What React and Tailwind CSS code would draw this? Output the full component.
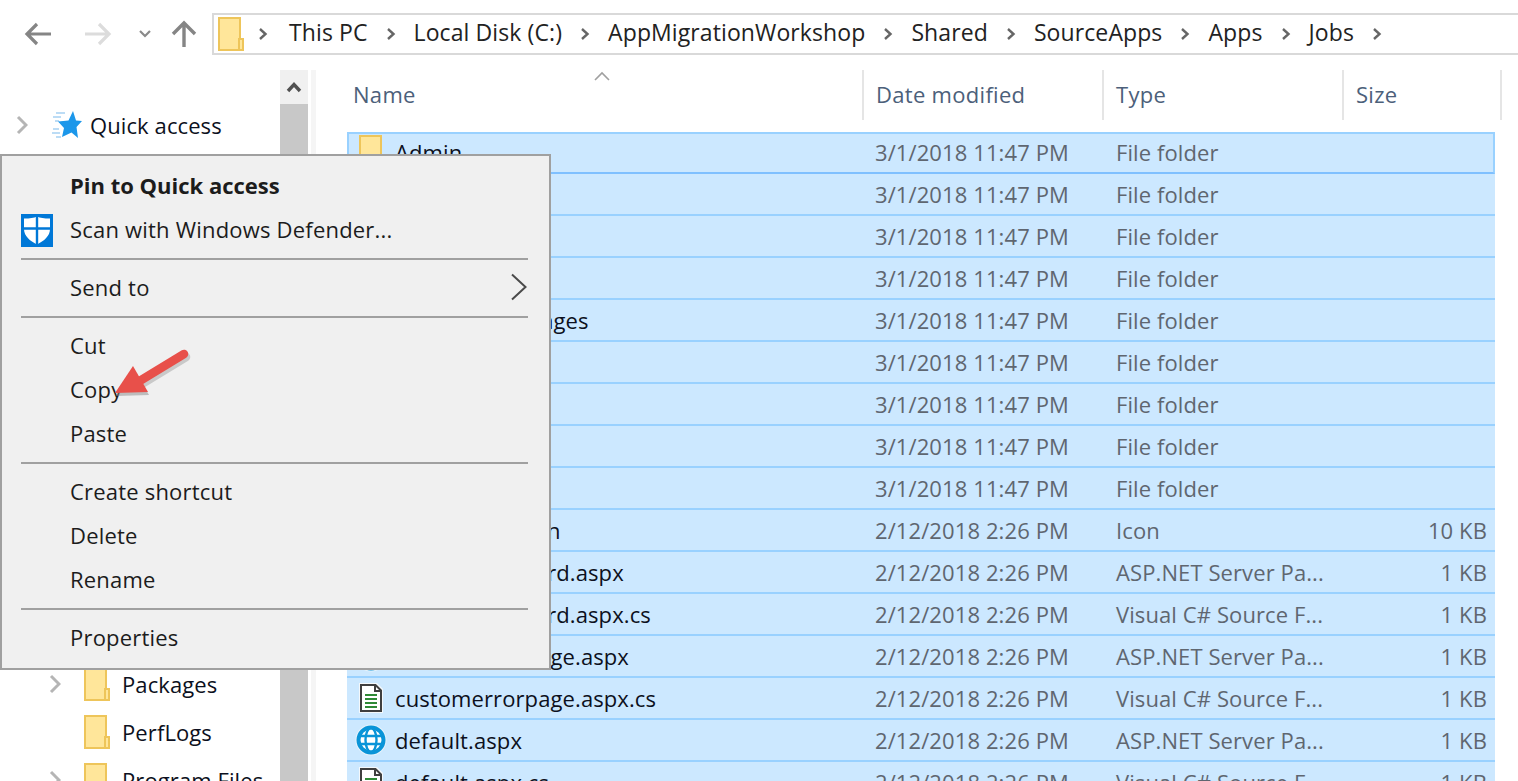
function Folder({ className = "" }) {
  return (
    <svg className={className} width="26" height="34" viewBox="0 0 26 34">
      <path d="M1 1H22V33H1Z" fill="#ffe69a" stroke="#eec55a" strokeWidth="2" />
      <path d="M21 22H25V33H21Z" fill="#ffe69a" stroke="#eec55a" strokeWidth="2" />
    </svg>
  );
}

function Chevron({ light }) {
  return (
    <svg width="12" height="20" viewBox="0 0 12 20" className="shrink-0">
      <path d="M2 2L10 10L2 18" fill="none" stroke={light ? "#b5b5b5" : "#8a8a8a"} strokeWidth="3" />
    </svg>
  );
}

function Crumb({ children }) {
  return (
    <div className="flex items-center gap-[18px]">
      <span className="pb-[4px]">{children}</span>
      <svg width="10" height="14" viewBox="0 0 10 14"><path d="M2 2L7.5 7L2 12" fill="none" stroke="#666" strokeWidth="2.4" /></svg>
    </div>
  );
}

function DocIcon() {
  return (
    <svg width="26" height="30" viewBox="0 0 26 30">
      <path d="M1 0H19L25 6V30H1Z" fill="#f4f8fb" />
      <path d="M3 2H17.5L23 7.5V28H3Z" fill="#fff" stroke="#3f3f3f" strokeWidth="2" />
      <path d="M17 2V8H23" fill="none" stroke="#3f3f3f" strokeWidth="2" />
      <path d="M7 12H19M7 16H19M7 20H19M7 24H19" stroke="#2f8a36" strokeWidth="2" />
    </svg>
  );
}

function GlobeIcon() {
  return (
    <svg width="32" height="32" viewBox="0 0 32 32">
      <circle cx="16" cy="16" r="15.5" fill="#e8f3fb" />
      <circle cx="16" cy="16" r="12.5" fill="#fff" stroke="#0a94d8" strokeWidth="4" />
      <ellipse cx="16" cy="16" rx="5.5" ry="12" fill="none" stroke="#0a94d8" strokeWidth="2.4" />
      <path d="M4 12H28M4 20H28" stroke="#0a94d8" strokeWidth="2.4" />
    </svg>
  );
}

function TreeItem({ name, chevron }) {
  return (
    <div className="flex items-center h-[48px]">
      <div className="w-[46px] pl-[11px] flex justify-start">{chevron && <Chevron light />}</div>
      <Folder />
      <span className="ml-[12px] text-[#0c1020]">{name}</span>
    </div>
  );
}

const D1 = "3/1/2018 11:47 PM";
const D2 = "2/12/2018 2:26 PM";
const ASP = "ASP.NET Server Pa...";
const CS = "Visual C# Source F...";
const rows = [
  { icon: "folder", name: "Admin", date: D1, type: "File folder", first: true },
  { icon: "folder", name: "", date: D1, type: "File folder" },
  { icon: "folder", name: "", date: D1, type: "File folder" },
  { icon: "folder", name: "", date: D1, type: "File folder" },
  { icon: "folder", name: "CustomErrorPages", date: D1, type: "File folder" },
  { icon: "folder", name: "", date: D1, type: "File folder" },
  { icon: "folder", name: "", date: D1, type: "File folder" },
  { icon: "folder", name: "", date: D1, type: "File folder" },
  { icon: "folder", name: "", date: D1, type: "File folder" },
  { icon: "doc", name: "Application Icon", date: D2, type: "Icon", size: "10 KB" },
  { icon: "globe", name: "changepassword.aspx", date: D2, type: ASP, size: "1 KB" },
  { icon: "doc", name: "changepassword.aspx.cs", date: D2, type: CS, size: "1 KB" },
  { icon: "globe", name: "customerrorpage.aspx", date: D2, type: ASP, size: "1 KB" },
  { icon: "doc", name: "customerrorpage.aspx.cs", date: D2, type: CS, size: "1 KB" },
  { icon: "globe", name: "default.aspx", date: D2, type: ASP, size: "1 KB" },
  { icon: "doc", name: "default.aspx.cs", date: D2, type: CS, size: "1 KB" },
];

function Row({ r }) {
  const cls = r.first
    ? "grid-cols-[513px_240px_240px_151px] border-2 border-[#99d1ff] border-b-[#7fc0ff] pb-[2px]"
    : "grid-cols-[515px_240px_240px_153px] border-b-2 border-[#99d1ff]";
  return (
    <div className={"grid items-center h-[42px] shrink-0 bg-[#cce8ff] " + cls}>
      <div className="flex items-center">
        <div className={(r.first ? "w-[46px]" : "w-[48px]") + " flex justify-center shrink-0"}>
          {r.icon === "folder" && <Folder />}
          {r.icon === "doc" && <DocIcon />}
          {r.icon === "globe" && <GlobeIcon />}
        </div>
        <span className="text-[#0c1020] whitespace-nowrap">{r.name}</span>
      </div>
      <span className="pl-[13px] text-[#5f6670]">{r.date}</span>
      <span className="pl-[14px] text-[#5f6670]">{r.type}</span>
      <span className="pr-[8px] text-right text-[#5f6670]">{r.size}</span>
    </div>
  );
}

function Head({ children, className = "" }) {
  return (
    <div className={"h-full flex items-center pb-[2px] tracking-[0.3px] text-[#4c607a] " + className}>{children}</div>
  );
}

function Item({ children, bold, icon, arrow }) {
  return (
    <div className={"flex items-center h-[44px] pb-[2px] pl-[19px] pr-[21px] text-[#1c1c1c] " + (bold ? "font-bold tracking-normal" : "tracking-[0.2px]")}>
      <div className="w-[49px] shrink-0 flex items-center">{icon}</div>
      <span className="flex-1 whitespace-nowrap">{children}</span>
      {arrow && (
        <svg width="18" height="28" viewBox="0 0 18 28"><path d="M2 1.5L15.5 14L2 26.5" fill="none" stroke="#4a4a4a" strokeWidth="2" /></svg>
      )}
    </div>
  );
}

function Sep() {
  return (
    <div className="h-[14px] flex items-center pl-[19px] pr-[21px]">
      <div className="h-[2px] w-full bg-[#a0a0a0]" />
    </div>
  );
}

export default function App() {
  return (
    <div className="relative h-[781px] w-[1518px] overflow-hidden bg-white flex flex-col text-[22px] leading-none tracking-[0.1px] [font-family:'Open_Sans','Noto_Sans',sans-serif]">
      {/* toolbar */}
      <div className="h-[70px] shrink-0 flex items-start pt-[13px]">
        <div className="flex items-center h-[42px] w-[212px] shrink-0">
          <svg className="ml-[24px]" width="28" height="24" viewBox="0 0 28 24"><path d="M27 12H3M13 2L3 12L13 22" fill="none" stroke="#858585" strokeWidth="3.2" /></svg>
          <svg className="ml-[32px]" width="28" height="24" viewBox="0 0 28 24"><path d="M1 12H25M15 2L25 12L15 22" fill="none" stroke="#dcdcdc" strokeWidth="3.2" /></svg>
          <svg className="ml-[26px]" width="14" height="10" viewBox="0 0 14 10"><path d="M2 2L7 7L12 2" fill="none" stroke="#8a8a8a" strokeWidth="2.2" /></svg>
          <svg className="ml-[19px]" width="26" height="28" viewBox="0 0 26 28"><path d="M13 27V3M2 14L13 3L24 14" fill="none" stroke="#858585" strokeWidth="3.4" /></svg>
        </div>
        <div className="flex-1 h-[42px] border-2 border-r-0 border-[#d9d9d9] flex items-center pl-[4px] text-[#222] text-[23px]">
          <Folder />
          <div className="flex items-center gap-[18px] ml-[14px] whitespace-nowrap">
            <svg className="mr-[3px]" width="10" height="14" viewBox="0 0 10 14"><path d="M2 2L7.5 7L2 12" fill="none" stroke="#666" strokeWidth="2.4" /></svg>
            <Crumb>This PC</Crumb>
            <Crumb>Local Disk (C:)</Crumb>
            <Crumb>AppMigrationWorkshop</Crumb>
            <Crumb>Shared</Crumb>
            <Crumb>SourceApps</Crumb>
            <Crumb>Apps</Crumb>
            <Crumb>Jobs</Crumb>
          </div>
        </div>
      </div>

      {/* body */}
      <div className="flex flex-1 min-h-0">
        {/* navigation pane */}
        <div className="w-[280px] shrink-0 pt-[31px] pl-[6px]">
          <div className="flex items-center h-[48px]">
            <div className="w-[32px] flex justify-center"><Chevron light /></div>
            <svg className="ml-[14px]" width="30" height="28" viewBox="0 0 30 28">
              <path d="M4 2H13M1 6H9M3 10H7M1 18H7M0 22H8M4 26H9" stroke="#bcdcf5" strokeWidth="2" />
              <path d="M21 0L24 9.500L30 10L24.500 16L26 27L19.500 21.500L10 26L12 17L6 10.500L16.500 9.500Z" fill="#1c97ea" />
            </svg>
            <span className="ml-[8px] text-[#0c1020]">Quick access</span>
          </div>
          <div className="h-[511px]" />
          <div className="pl-[32px]">
            <TreeItem name="Packages" chevron />
            <TreeItem name="PerfLogs" />
            <TreeItem name="Program Files" chevron />
          </div>
        </div>

        {/* scrollbar */}
        <div className="w-[28px] shrink-0 flex flex-col bg-[#c8c8c8]">
          <div className="h-[34px] bg-[#f0f0f0] flex items-center justify-center">
            <svg width="16" height="12" viewBox="0 0 16 12"><path d="M2 10L8 3.500L14 10" fill="none" stroke="#505050" strokeWidth="3.4" /></svg>
          </div>
        </div>
        <div className="w-[3px] shrink-0" />
        <div className="w-[5px] shrink-0 bg-[#f5f5f5]" />

        {/* file list */}
        <div className="relative flex-1 min-w-0 pl-[31px] flex flex-col">
          <div className="grid grid-cols-[515px_240px_240px_160px] h-[50px] shrink-0">
            <Head className="pl-[6px]">Name</Head>
            <Head className="pl-[12px] border-l-2 border-[#e5e5e5]">Date modified</Head>
            <Head className="pl-[12px] border-l-2 border-[#e5e5e5]">Type</Head>
            <Head className="pl-[12px] border-x-2 border-[#e5e5e5]">Size</Head>
          </div>
          <svg className="absolute left-[278px] top-[1px]" width="16" height="10" viewBox="0 0 16 10"><path d="M1 9L8 2L15 9" fill="none" stroke="#a0a0a0" strokeWidth="1.600" /></svg>
          <div className="mt-[12px] w-[1148px] flex flex-col">
            {rows.map((r, i) => <Row key={i} r={r} />)}
          </div>
        </div>
      </div>

      {/* context menu */}
      <div className="absolute left-0 top-[154px] w-[551px] h-[516px] bg-[#f0f0f0] border-2 border-[#a0a0a0] pt-[8px]">
        <Item bold>Pin to Quick access</Item>
        <Item icon={
          <svg width="32" height="33" viewBox="0 0 32 33" className="mt-[2px]">
            <rect width="32" height="33" fill="#0078d7" />
            <path d="M16 2.500C13 4 9 4.500 3 4.500V15C3 22 9 27 16 30.500C23 27 29 22 29 15V4.500C23 4.500 19 4 16 2.500Z" fill="#fff" />
            <path d="M16 2V31M3 14.500H29" stroke="#0078d7" strokeWidth="2.400" />
          </svg>
        }>Scan with Windows Defender...</Item>
        <Sep />
        <Item arrow>Send to</Item>
        <Sep />
        <Item>Cut</Item>
        <Item>Copy</Item>
        <Item>Paste</Item>
        <Sep />
        <Item>Create shortcut</Item>
        <Item>Delete</Item>
        <Item>Rename</Item>
        <Sep />
        <Item>Properties</Item>
      </div>

      {/* annotation arrow */}
      <svg className="absolute left-[110px] top-[345px]" width="90" height="62" viewBox="0 0 90 62">
        <path d="M74 9L28 37" stroke="#9a9a9a" strokeWidth="8.500" strokeLinecap="round" opacity="0.45" transform="translate(2 3)" />
        <path d="M5 48L23 21L38 47Z" fill="#8a8a8a" opacity="0.5" transform="translate(1 3)" />
        <path d="M74 9L28 37" stroke="#e8504a" strokeWidth="8.500" strokeLinecap="round" />
        <path d="M5 48L23 21L38 47Z" fill="#e8504a" />
      </svg>
    </div>
  );
}
